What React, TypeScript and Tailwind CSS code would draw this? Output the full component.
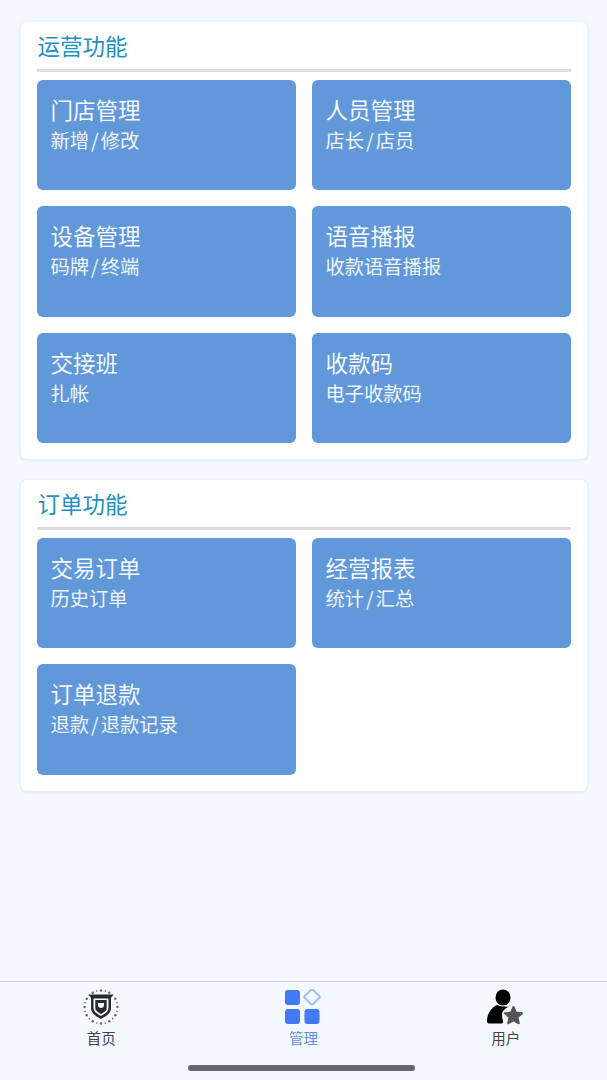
const font = { fontFamily: '"Noto Sans CJK SC", "Noto Sans", sans-serif' };

const sections = [
  {
    title: "运营功能",
    items: [
      { name: "门店管理", desc: "新增/修改" },
      { name: "人员管理", desc: "店长/店员" },
      { name: "设备管理", desc: "码牌/终端" },
      { name: "语音播报", desc: "收款语音播报" },
      { name: "交接班", desc: "扎帐" },
      { name: "收款码", desc: "电子收款码" },
    ],
  },
  {
    title: "订单功能",
    items: [
      { name: "交易订单", desc: "历史订单" },
      { name: "经营报表", desc: "统计/汇总" },
      { name: "订单退款", desc: "退款/退款记录" },
    ],
  },
];

function ShieldIcon() {
  const dots = Array.from({ length: 24 }, (_, i) => {
    const a = (i / 24) * Math.PI * 2;
    return { x: 18 + Math.cos(a) * 16.5, y: 18 + Math.sin(a) * 16.5, r: i % 2 === 0 ? 1.2 : 0.8 };
  });
  return (
    <svg width="36" height="36" viewBox="0 0 36 36">
      {dots.map((d, i) => (
        <circle key={i} cx={d.x} cy={d.y} r={d.r} fill="#666" />
      ))}
      <path d="M6 5.500h24l-2 3.500v10c0 5.500-5.500 8.500-10 11-4.500-2.500-10-5.500-10-11V9z" fill="#2a2a2a" />
      <path d="M10.500 9.500h15v9.500c0 3.800-4 6-7.500 8-3.500-2-7.500-4.200-7.500-8z" fill="#f4f8ff" />
      <path d="M12.300 11h11.400v8c0 2.800-3.200 4.500-5.700 6-2.500-1.500-5.700-3.200-5.700-6z" fill="#2a2a2a" />
      <path d="M15 14h6v2c0 1.800-1.500 3-3 3s-3-1.200-3-3z" fill="#f4f8ff" />
    </svg>
  );
}

function GridIcon() {
  return (
    <svg width="36" height="36" viewBox="0 0 36 36">
      <rect x="0" y="1" width="15" height="15" rx="3" fill="#4479f5" />
      <rect x="0" y="20" width="15" height="15" rx="3" fill="#4479f5" />
      <rect x="19.500" y="20" width="15" height="15" rx="3" fill="#4479f5" />
      <rect x="21.200" y="2.200" width="11.600" height="11.600" rx="1.500" transform="rotate(45 27 8)" fill="none" stroke="#a5bcf0" strokeWidth="2" />
    </svg>
  );
}

function UserStarIcon() {
  return (
    <svg width="38" height="36" viewBox="0 0 38 36">
      <ellipse cx="16" cy="8.500" rx="7.500" ry="8" fill="#000" />
      <path d="M0 32c0-7 4-13 10-16 3 1.500 8 2 12 1.500-4 2-7 4.500-7 8.500 0 2.500 1 5 1 7 0 1-1 1.500-2 1.500H2c-1.500 0-2-1-2-2.500z" fill="#000" />
      <polygon
        points="26.500,18 28.970,23.600 35.060,24.200 30.500,28.300 31.800,34.300 26.500,31.200 21.200,34.300 22.500,28.300 17.940,24.200 24.030,23.600"
        fill="#555"
        stroke="#555"
        strokeWidth="2"
        strokeLinejoin="round"
      />
    </svg>
  );
}

function TabItem({ icon, label, active }: { icon: React.ReactNode; label: string; active?: boolean }) {
  return (
    <div className="flex flex-col items-center">
      <div className="h-[36px]">{icon}</div>
      <span className={`mt-[3px] text-[14.5px] leading-[20px] ${active ? "text-[#5f8fdc]" : "text-[#444]"}`}>{label}</span>
    </div>
  );
}

// the slash in the reference sits wider than the font's own glyph
function Desc({ text }: { text: string }) {
  const [left, right] = text.split("/");
  return (
    <div className="text-[19.3px] leading-[32px] text-white/90">
      {left}
      {right ? <span className="px-[2px]">/</span> : null}
      {right}
    </div>
  );
}

export default function App() {
  return (
    <div style={font} className="flex h-[1080px] flex-col bg-[#f4f8ff]">
      <main className="flex flex-1 flex-col gap-[21px] px-[20.5px] pt-[22px]">
        {sections.map((section) => (
          <section key={section.title} className="rounded-[6px] bg-white px-[16px] pb-[16px] shadow-[0_1px_4px_rgba(0,0,0,0.1)]">
            <h2 className="flex h-[50px] items-center border-b-[3px] border-[#dddddd] pl-px text-[22.5px] text-[#1f8fc4]">
              {section.title}
            </h2>
            <div className="mt-[8px] grid grid-cols-2 gap-[16px]">
              {section.items.map((item) => (
                <div key={item.name} className="h-[110.33px] rounded-[6px] bg-[#6198da] px-[14px] pt-[14px] text-white/95">
                  <div className="text-[22.5px] leading-[30px]">{item.name}</div>
                  <Desc text={item.desc} />
                </div>
              ))}
            </div>
          </section>
        ))}
      </main>
      <footer className="relative h-[99px] border-t border-[#cfd2d8]">
        <div className="grid grid-cols-3 pt-[7px]">
          <TabItem icon={<ShieldIcon />} label="首页" />
          <TabItem icon={<GridIcon />} label="管理" active />
          <TabItem icon={<UserStarIcon />} label="用户" />
        </div>
        <div className="absolute bottom-[9px] left-[188px] h-[6px] w-[227px] rounded-full bg-[#636870]" />
      </footer>
    </div>
  );
}
